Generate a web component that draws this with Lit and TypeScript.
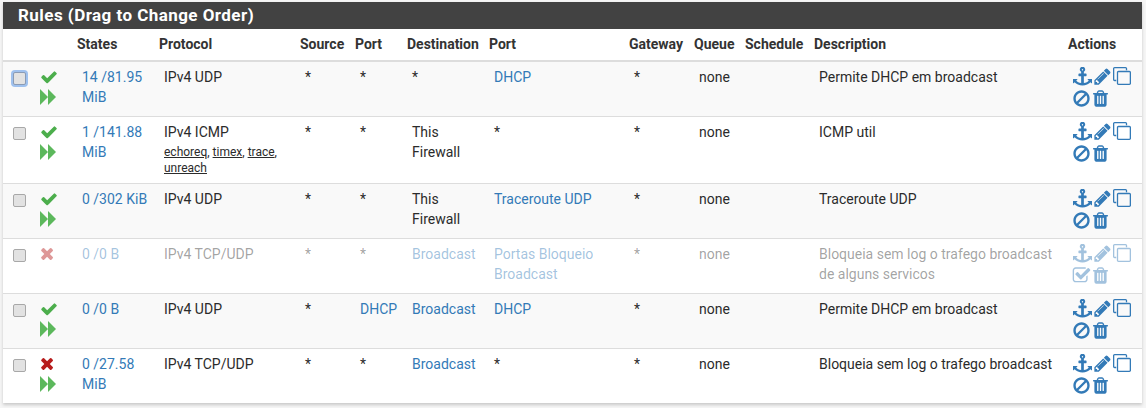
import { LitElement, html, css, svg } from "lit";
import { customElement } from "lit/decorators.js";

const P: Record<string, string> = {
  check: "M1671 566q0 40-28 68l-724 724-136 136q-28 28-68 28t-68-28l-136-136-362-362q-28-28-28-68t28-68l136-136q28-28 68-28t68 28l294 295 656-657q28-28 68-28t68 28l136 136q28 28 28 68z",
  times: "M1298 1254q0 40-28 68l-136 136q-28 28-68 28t-68-28l-294-294-294 294q-28 28-68 28t-68-28l-136-136q-28-28-28-68t28-68l294-294-294-294q-28-28-28-68t28-68l136-136q28-28 68-28t68 28l294 294 294-294q28-28 68-28t68 28l136 136q28 28 28 68t-28 68l-294 294 294 294q28 28 28 68z",
  anchor: "M960 256q0-26-19-45t-45-19-45 19-19 45 19 45 45 19 45-19 19-45zm832 896v352q0 22-20 30-8 2-12 2-12 0-23-9l-93-93q-119 143-318.5 226.5t-429.5 83.5-429.5-83.5-318.5-226.5l-93 93q-9 9-23 9-4 0-12-2-20-8-20-30v-352q0-14 9-23t23-9h352q22 0 30 20 8 19-7 35l-100 100q67 91 189.5 153.5t271.5 82.5v-647h-192q-26 0-45-19t-19-45v-128q0-26 19-45t45-19h192v-163q-58-34-93-92.5t-35-128.5q0-106 75-181t181-75 181 75 75 181q0 70-35 128.5t-93 92.5v163h192q26 0 45 19t19 45v128q0 26-19 45t-45 19h-192v647q149-20 271.5-82.5t189.5-153.5l-100-100q-15-16-7-35 8-20 30-20h352q14 0 23 9t9 23z",
  pencil: "M491 1536l91-91-235-235-91 91v107h128v128h107zm523-928q0-22-22-22-10 0-17 7l-542 542q-7 7-7 17 0 22 22 22 10 0 17-7l542-542q7-7 7-17zm-54-192l416 416-832 832h-416v-416zm683 96q0 53-37 90l-166 166-416-416 166-165q36-38 90-38 53 0 91 38l235 234q37 39 37 91z",
  clone: "M1664 1632v-1088q0-13-9.5-22.5t-22.5-9.5h-1088q-13 0-22.5 9.5t-9.5 22.5v1088q0 13 9.5 22.5t22.5 9.5h1088q13 0 22.5-9.5t9.5-22.5zm128-1088v1088q0 66-47 113t-113 47h-1088q-66 0-113-47t-47-113v-1088q0-66 47-113t113-47h1088q66 0 113 47t47 113zm-384-384v160h-128v-160q0-13-9.5-22.5t-22.5-9.5h-1088q-13 0-22.5 9.5t-9.5 22.5v1088q0 13 9.5 22.5t22.5 9.5h160v128h-160q-66 0-113-47t-47-113v-1088q0-66 47-113t113-47h1088q66 0 113 47t47 113z",
  ban: "M1440 893q0-161-87-295l-754 753q137 89 297 89 111 0 211.5-43.5t173.5-116.5 116-174.5 43-212.5zm-999 299l755-754q-135-91-300-91-148 0-273 73t-198 199-73 274q0 162 89 299zm1223-299q0 157-61 300t-163.5 246-245 164-298.5 61-298.5-61-245-164-163.5-246-61-300 61-299.5 163.5-245.5 245-164 298.5-61 298.5 61 245 164 163.5 245.5 61 299.5z",
  trash: "M704 1376v-704q0-14-9-23t-23-9h-64q-14 0-23 9t-9 23v704q0 14 9 23t23 9h64q14 0 23-9t9-23zm256 0v-704q0-14-9-23t-23-9h-64q-14 0-23 9t-9 23v704q0 14 9 23t23 9h64q14 0 23-9t9-23zm256 0v-704q0-14-9-23t-23-9h-64q-14 0-23 9t-9 23v704q0 14 9 23t23 9h64q14 0 23-9t9-23zm-544-992h448l-48-117q-7-9-17-11h-317q-10 2-17 11zm928 32v64q0 14-9 23t-23 9h-96v948q0 83-47 143.5t-113 60.5h-832q-66 0-113-58.5t-47-141.5v-952h-96q-14 0-23-9t-9-23v-64q0-14 9-23t23-9h309l70-167q15-37 54-63t79-26h320q40 0 79 26t54 63l70 167h309q14 0 23 9t9 23z",
  enable: "M1472 930v318q0 119-84.5 203.5t-203.5 84.5h-832q-119 0-203.5-84.5t-84.5-203.5v-832q0-119 84.5-203.5t203.5-84.5h832q63 0 117 25 15 7 18 23 3 17-9 29l-49 49q-10 10-23 10-3 0-9-2-23-6-45-6h-832q-66 0-113 47t-47 113v832q0 66 47 113t113 47h832q66 0 113-47t47-113v-254q0-13 9-22l64-64q10-10 23-10 6 0 12 3 20 8 20 29zm231-489l-814 814q-24 24-57 24t-57-24l-430-430q-24-24-24-57t24-57l110-110q24-24 57-24t57 24l263 263 647-647q24-24 57-24t57 24l110 110q24 24 24 57t-24 57z",
};
const icon = (n: string) => html`<svg class="i ${n}" viewBox="0 0 1792 1792" fill="currentColor">${svg`<path d=${P[n]}></path>`}</svg>`;
const ff = html`<svg class="ff" viewBox="0 0 16 16">${svg`<path fill="#5cb85c" d="M0 0 8 8 0 16zM8 0 16 8 8 16z"></path>`}</svg>`;

type Rule = { h: number; st: "ok" | "block"; off?: boolean; focus?: boolean; states: string; proto: string; sub?: boolean; src: string; sport: string; dest: string; destL?: boolean; port: string; portL?: boolean; gw: string; desc: string };
const rules: Rule[] = [
  { h: 55, st: "ok", focus: true, states: "14 /81.95 MiB", proto: "IPv4 UDP", src: "*", sport: "*", dest: "*", port: "DHCP", portL: true, gw: "*", desc: "Permite DHCP em broadcast" },
  { h: 67, st: "ok", states: "1 /141.88 MiB", proto: "IPv4 ICMP", sub: true, src: "*", sport: "*", dest: "This Firewall", port: "*", gw: "*", desc: "ICMP util" },
  { h: 55, st: "ok", states: "0 /302 KiB", proto: "IPv4 UDP", src: "*", sport: "*", dest: "This Firewall", port: "Traceroute UDP", portL: true, gw: "*", desc: "Traceroute UDP" },
  { h: 55, st: "block", off: true, states: "0 /0 B", proto: "IPv4 TCP/UDP", src: "*", sport: "*", dest: "Broadcast", destL: true, port: "Portas Bloqueio Broadcast", portL: true, gw: "*", desc: "Bloqueia sem log o trafego broadcast de alguns servicos" },
  { h: 55, st: "ok", states: "0 /0 B", proto: "IPv4 UDP", src: "*", sport: "DHCP", dest: "Broadcast", destL: true, port: "DHCP", portL: true, gw: "*", desc: "Permite DHCP em broadcast" },
  { h: 55, st: "block", states: "0 /27.58 MiB", proto: "IPv4 TCP/UDP", src: "*", sport: "*", dest: "Broadcast", destL: true, port: "*", gw: "*", desc: "Bloqueia sem log o trafego broadcast" },
];
const widths = [30, 39, 82, 141, 55, 52, 82, 140, 65, 51, 69, 254, 79];
const heads = ["", "", "States", "Protocol", "Source", "Port", "Destination", "Port", "Gateway", "Queue", "Schedule", "Description", "Actions"];

@customElement("app-root")
export class AppRoot extends LitElement {
  static styles = css`
    :host { display: block; font-family: Roboto, "Liberation Sans", sans-serif; font-size: 14px; line-height: 20px; color: #2b2b2b; background: #f5f5f5; height: 408px; padding: 2px 4px 0 3px; box-sizing: border-box; }
    .panel { background: #fff; box-shadow: 0 2px 3px rgba(0,0,0,.18); }
    h2 { margin: 0; height: 27px; background: #424242; color: #fff; font-size: 17px; line-height: 27px; font-weight: 700; padding-left: 15px; letter-spacing: .45px; }
    table { border-collapse: collapse; table-layout: fixed; width: 1139px; }
    th { text-align: left; font-weight: 700; font-size: 14px; height: 32px; padding: 0 0 2px 5px; border-bottom: 2px solid #ddd; box-sizing: border-box; color: #333; white-space: nowrap; }
    td { vertical-align: top; padding: 5px 0 0 10px; box-sizing: border-box; border-bottom: 1px solid #ddd; }
    tr:last-child td { border-bottom: 0; }
    tr.odd td { background: #f9f9f9; }
    tr.off td { color: rgba(33,33,33,.42); }
    tr.off svg { opacity: .45; }
    tr.off td.lnk, tr.off td .lnk { color: rgba(51,122,183,.45); }
    .lnk, td.lnk { color: #337ab7; }
    .cb { appearance: none; display: block; margin: 5px 0 0 0; width: 13px; height: 13px; border: 1px solid #a8a8a8; border-radius: 2px; background: #e2e2e2; box-sizing: border-box; }
    .cb.focus { box-shadow: 0 0 0 2px #9fc1ee; border-color: #8a9bb5; }
    .stat { display: flex; flex-direction: column; gap: 3px; padding-top: 1px; }
    td.s { padding-left: 7px; }
    td.c { padding-left: 10px; }
    .i { display: block; width: 19px; height: 19px; flex: none; }
    .i.check { width: 18px; height: 18px; color: #4cae4c; }
    .i.times { width: 18px; height: 18px; color: #b71c1c; }
    .ff { display: block; width: 16px; height: 16px; }
    .acts { display: flex; flex-wrap: wrap; width: 66px; color: #337ab7; row-gap: 3px; }
    .acts .pencil { margin-left: 1px; }
    .acts .clone { margin-left: 1px; width: 18px; height: 18px; }
    .acts .ban, .acts .enable { margin-left: -1px; }
    .sub { font-size: 12px; line-height: 16px; margin-top: 2px; }
    .sub u { text-underline-offset: 1px; }
  `;
  render() {
    return html`<div class="panel">
      <h2>Rules (Drag to Change Order)</h2>
      <table>
        <colgroup>${widths.map((w) => html`<col style="width:${w}px" />`)}</colgroup>
        <thead><tr>${heads.map((h) => html`<th>${h}</th>`)}</tr></thead>
        <tbody>${rules.map((r, i) => html`
          <tr class="${i % 2 === 0 ? "odd" : ""} ${r.off ? "off" : ""}" style="height:${r.h}px">
            <td class="c"><input type="checkbox" class="cb ${r.focus ? "focus" : ""}" /></td>
            <td class="s"><div class="stat">${icon(r.st === "ok" ? "check" : "times")}${r.off ? "" : ff}</div></td>
            <td><span class="lnk">${r.states}</span></td>
            <td>${r.proto}${r.sub ? html`<div class="sub"><u>echoreq</u>, <u>timex</u>, <u>trace</u>, <u>unreach</u></div>` : ""}</td>
            <td>${r.src}</td>
            <td class="${r.sport !== "*" ? "lnk" : ""}">${r.sport}</td>
            <td class="${r.destL ? "lnk" : ""}">${r.dest}</td>
            <td class="${r.portL ? "lnk" : ""}">${r.port}</td>
            <td>${r.gw}</td>
            <td>none</td>
            <td></td>
            <td>${r.desc}</td>
            <td><div class="acts">${icon("anchor")}${icon("pencil")}${icon("clone")}${icon(r.off ? "enable" : "ban")}${icon("trash")}</div></td>
          </tr>`)}</tbody>
      </table>
    </div>`;
  }
}
